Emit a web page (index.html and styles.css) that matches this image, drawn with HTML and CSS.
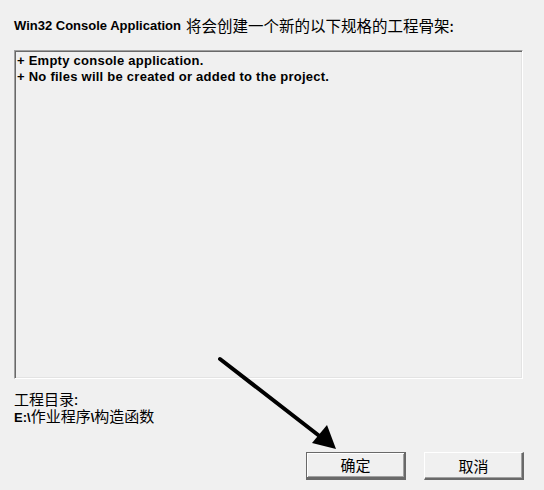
FILE: index.html
```html
<!DOCTYPE html>
<html>
<head>
<meta charset="utf-8">
<link rel="stylesheet" href="styles.css">
</head>
<body>
<div class="dialog">
  <div class="title"><span class="latin">Win32 Console Application</span> <span class="cjk">将会创建一个新的以下规格的工程骨架:</span></div>
  <div class="box">
    <div class="line">+ Empty console application.</div>
    <div class="line">+ No files will be created or added to the project.</div>
  </div>
  <div class="dir">
    <div class="dir-label">工程目录:</div>
    <div class="dir-path"><span class="latin">E:\</span>作业程序<span class="latin">\</span>构造函数</div>
  </div>
  <div class="buttons">
    <button class="btn btn-default">确定</button>
    <button class="btn">取消</button>
  </div>
  <svg class="arrow" width="544" height="490" viewBox="0 0 544 490">
    <line x1="220" y1="359" x2="322" y2="438" stroke="#000" stroke-width="4" stroke-linecap="round"/>
    <polygon points="336,449 312,443 327,425" fill="#000"/>
  </svg>
</div>
</body>
</html>
```
FILE: styles.css
```css
html, body {
  margin: 0;
  padding: 0;
  background: #f0f0f0;
}
.dialog {
  position: relative;
  width: 544px;
  height: 490px;
  overflow: hidden;
  box-sizing: border-box;
  padding: 14px 0 0 14px;
  display: flex;
  flex-direction: column;
  font-family: "Liberation Sans", "Noto Sans CJK SC", sans-serif;
  color: #000;
}
.title {
  height: 22px;
  display: flex;
  align-items: center;
  white-space: nowrap;
}
.title .latin {
  font-family: "Liberation Sans", sans-serif;
  font-weight: bold;
  font-size: 13px;
  margin-right: 5px;
}
.title .cjk {
  font-family: "Noto Sans CJK SC", sans-serif;
  font-size: 15.5px;
}
.box {
  margin-top: 14px;
  width: 509px;
  height: 329px;
  box-sizing: border-box;
  border-top: 1px solid #a0a0a0;
  border-left: 1px solid #a0a0a0;
  border-right: 1px solid #fff;
  border-bottom: 1px solid #fff;
  box-shadow: inset 1px 1px 0 #696969, inset -1px -1px 0 #e3e3e3;
  padding: 2px 0 0 2px;
}
.line {
  font-family: "Liberation Sans", sans-serif;
  font-weight: bold;
  font-size: 13px;
  letter-spacing: 0.25px;
  line-height: 16px;
  white-space: nowrap;
}
.dir {
  margin-top: 11px;
  font-family: "Noto Sans CJK SC", sans-serif;
  font-size: 15px;
  line-height: 17px;
}
.dir .latin {
  font-family: "Liberation Sans", sans-serif;
  font-weight: bold;
  font-size: 13px;
}
.buttons {
  margin-top: 26px;
  margin-left: 292px;
  display: flex;
  gap: 18px;
}
.btn {
  width: 100px;
  height: 28px;
  margin: 0;
  padding: 0;
  background: #f0f0f0;
  font-family: "Noto Sans CJK SC", sans-serif;
  font-size: 15px;
  color: #000;
  box-sizing: border-box;
  border-top: 1px solid #fff;
  border-left: 1px solid #fff;
  border-right: 2px solid #696969;
  border-bottom: 2px solid #696969;
  box-shadow: inset -1px -1px 0 #a0a0a0;
  line-height: 24px;
}
.btn-default {
  border: 1px solid #696969;
  border-bottom: 3px solid #696969;
  border-right: 2px solid #696969;
  box-shadow: inset 1px 1px 0 #fff, inset -1px -1px 0 #a0a0a0;
}
.arrow {
  position: absolute;
  left: 0;
  top: 0;
  pointer-events: none;
}
```
